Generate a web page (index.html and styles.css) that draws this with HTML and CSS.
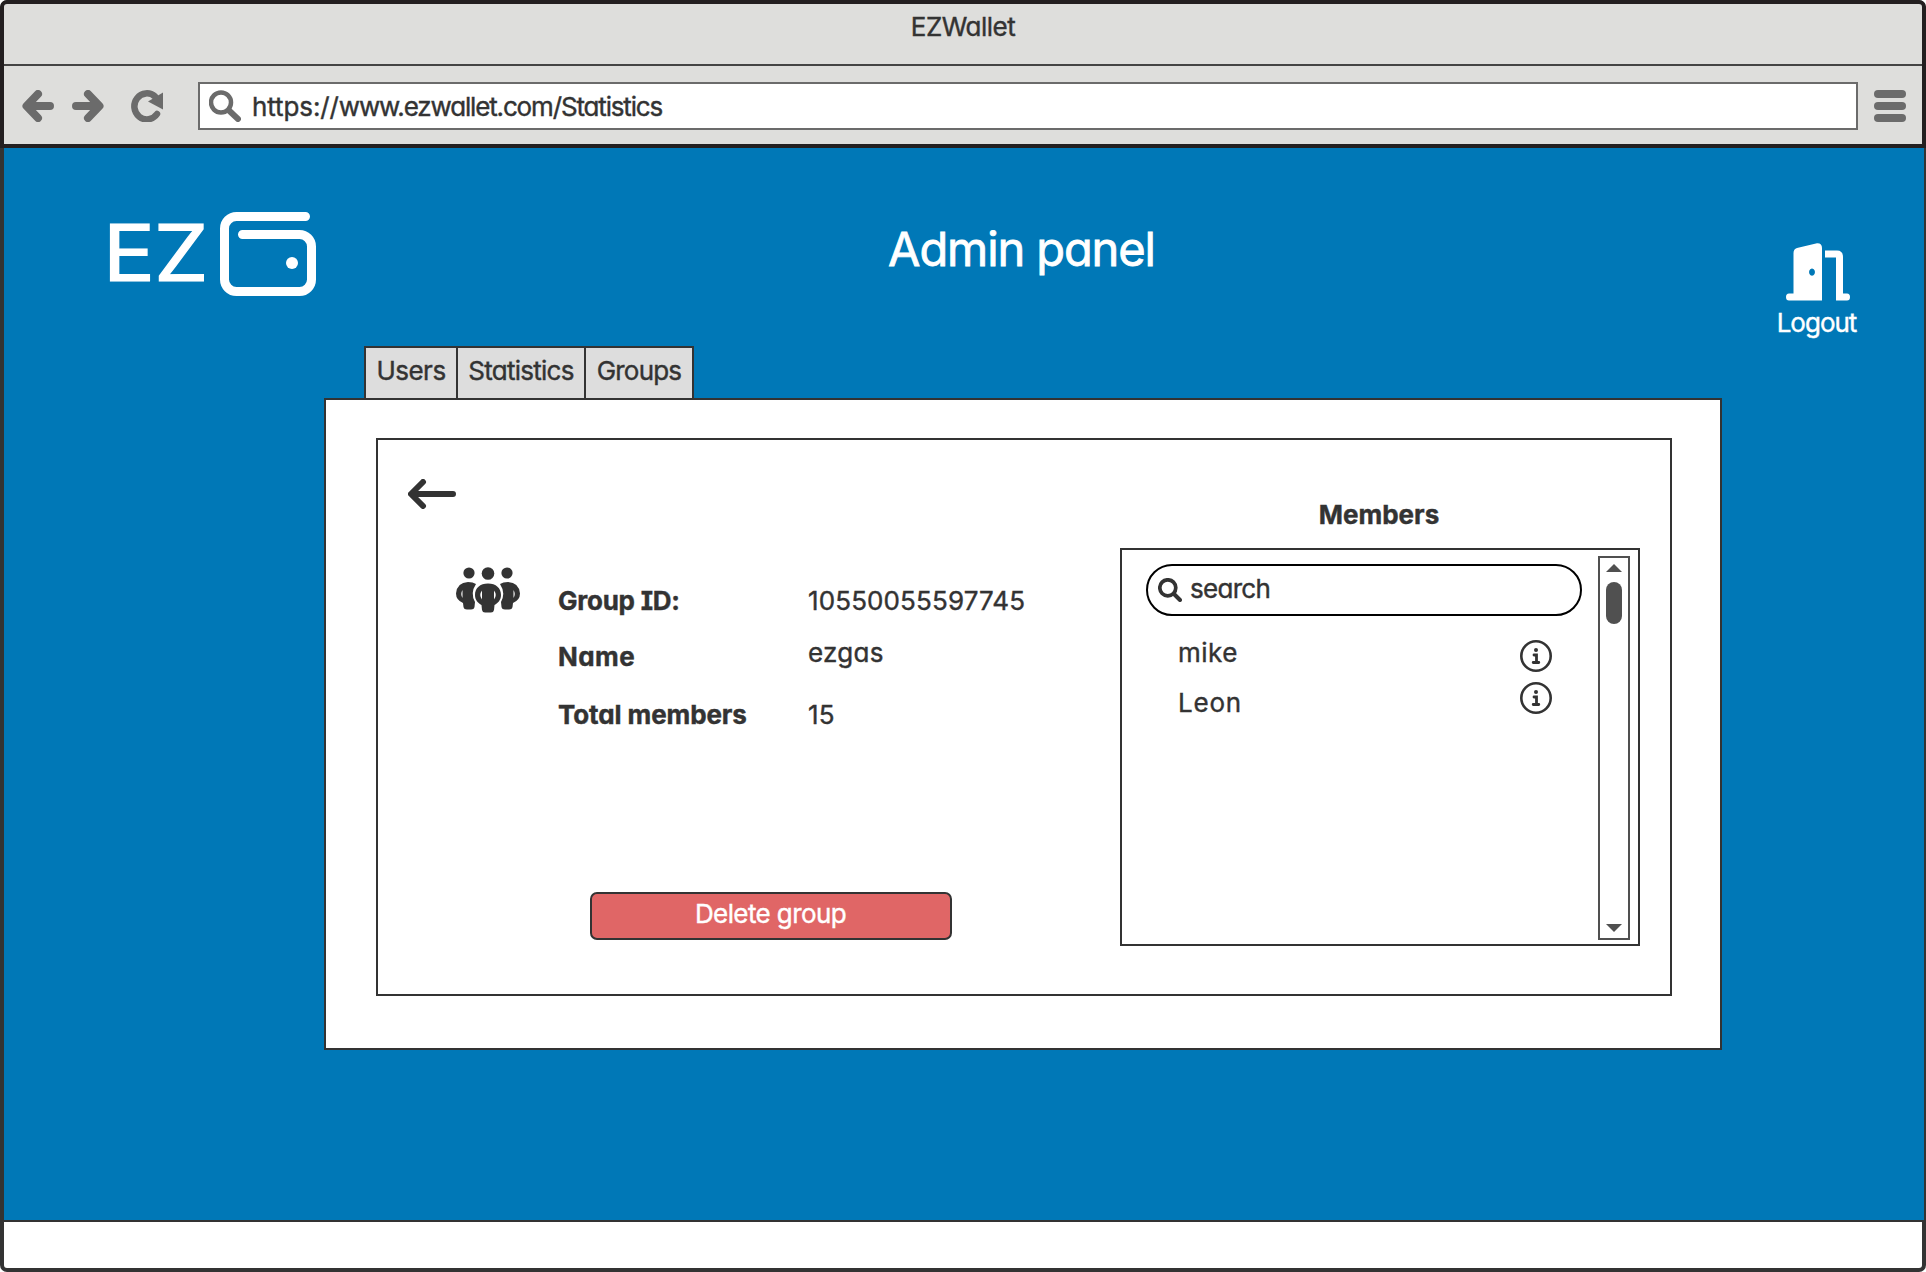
FILE: index.html
```html
<!DOCTYPE html>
<html lang="en">
<head>
<meta charset="utf-8">
<title>EZWallet</title>
<link rel="stylesheet" href="styles.css">
</head>
<body>
<div class="window">
  <header class="chrome">
    <div class="titlebar"><span class="t-title">EZWallet</span></div>
    <div class="toolbar">
      <svg class="nav-back" width="32" height="32" viewBox="0 0 32 32"><path d="M16 4 4.500 16 16 28M5 16h23" class="nav-stroke"/></svg>
      <svg class="nav-forward" width="32" height="32" viewBox="0 0 32 32"><path d="M16 4 27.500 16 16 28M27 16H4" class="nav-stroke"/></svg>
      <svg class="nav-reload" width="32" height="32" viewBox="0 0 32 32"><path d="M26 24A12.500 13 0 1 1 24 6.500" fill="none" stroke="#6b6b6b" stroke-width="6.500" stroke-linecap="round"/><path d="M32 2.500V19.500L17 11.500z" fill="#6b6b6b"/></svg>
      <div class="address">
        <svg width="32" height="32" viewBox="0 0 32 32" fill="none" stroke="#6b6b6b" stroke-linecap="round"><circle cx="12" cy="12.500" r="10" stroke-width="4.500"/><path d="M20 20.500 29 29" stroke-width="6"/></svg>
        <span class="t-url"><span class="t-scheme">https://</span>www.ezwallet.com/Statistics</span>
      </div>
      <svg class="menu" width="32" height="32" viewBox="0 0 32 32" fill="#6b6b6b"><rect width="32" height="8" rx="4"/><rect y="12" width="32" height="8" rx="4"/><rect y="24" width="32" height="8" rx="4"/></svg>
    </div>
  </header>
  <main class="page">
    <div class="hero">
      <div class="brand">
        <span class="t-brand">EZ</span>
        <svg width="96" height="84" viewBox="0 0 96 84" fill="none" stroke="#fff" stroke-width="9" stroke-linecap="round"><path d="M85.500 4.500H16.500a12 12 0 0 0-12 12v51a12 12 0 0 0 12 12h63a12 12 0 0 0 12-12V34.500a12 12 0 0 0-12-12H22.500"/><circle cx="72" cy="51" r="6" fill="#fff" stroke="none"/></svg>
      </div>
      <h1 class="t-heading">Admin panel</h1>
      <a class="logout">
        <svg width="64" height="58" viewBox="0 0 64 58" fill="#fff"><path fill-rule="evenodd" d="M3 50.500H7.500V10Q7.500 6 11 5L31 .300Q36 0 36 5V57.500H3Q0 57.500 0 54Q0 50.500 3 50.500zM26 25.500a2.900 3.600 0 1 0 .01 0z"/><path d="M39 7.500H51Q57 7.500 57 14V50.500H61Q64 50.500 64 54Q64 57.500 61 57.500H50V14.500H39z"/></svg>
        <span class="t-logout">Logout</span>
      </a>
    </div>
    <nav class="tabs">
      <a class="tab tab-users"><span class="t-users">Users</span></a>
      <a class="tab tab-stats"><span class="t-stats">Statistics</span></a>
      <a class="tab tab-groups"><span class="t-groups">Groups</span></a>
    </nav>
    <section class="panel">
      <div class="card">
        <div class="info">
          <svg class="back" width="48" height="30" viewBox="0 0 48 30" fill="none" stroke="#333" stroke-width="6" stroke-linecap="round" stroke-linejoin="round"><path d="M15 3 3 15l12 12M4 15h41"/></svg>
          <div class="summary">
            <svg width="64" height="46" viewBox="0 0 64 46" fill="#333">
              <circle cx="13" cy="6" r="5.600"/><circle cx="51" cy="6" r="5.600"/><circle cx="32" cy="6.500" r="6.300"/>
              <path fill-rule="evenodd" d="M12 15Q17 15 20 17Q14 26 19 35L18.500 40Q18 42.500 15 42.500H11Q8 42.500 7.500 40L7 36Q0 33 0 26.500Q1 15.500 12 15zM6.500 23Q4 27 6.500 31z"/>
              <path fill-rule="evenodd" d="M52 15Q47 15 44 17Q50 26 45 35L45.500 40Q46 42.500 49 42.500H53Q56 42.500 56.500 40L57 36Q64 33 64 26.500Q63 15.500 52 15zM57.500 23Q60 27 57.500 31z"/>
              <path fill-rule="evenodd" d="M32 16.500C24 16.500 19 21 19 28C19 33 22 36 25.500 38L26 43Q26.500 45.500 29 45.500H35Q37.500 45.500 38 43L38.500 38C42 36 45 33 45 28C45 21 40 16.500 32 16.500zM26 23.500Q22.500 28 26 32.500zM38 23.500Q41.500 28 38 32.500z"/>
            </svg>
            <dl class="facts">
              <dt><span class="t-gid">Group ID:</span></dt><dd><span class="t-num">10550055597745</span></dd>
              <dt><span class="t-name">Name</span></dt><dd class="raised"><span class="t-ezgas">ezgas</span></dd>
              <dt><span class="t-total">Total members</span></dt><dd><span class="t-num">15</span></dd>
            </dl>
          </div>
          <button class="delete"><span class="t-delete">Delete group</span></button>
        </div>
        <div class="members">
          <h2><span class="t-members">Members</span></h2>
          <div class="list">
            <div class="list-body">
              <div class="search">
                <svg width="24" height="24" viewBox="0 0 24 24" fill="none" stroke="#333" stroke-linecap="round"><circle cx="9.800" cy="9.800" r="8" stroke-width="3.700"/><path d="M16 16l6 6" stroke-width="4"/></svg>
                <span class="t-search">search</span>
              </div>
              <div class="people">
                <ul class="names"><li><span class="t-mike">mike</span></li><li><span class="t-leon">Leon</span></li></ul>
                <div class="icons">
                  <svg width="32" height="32" viewBox="0 0 32 32"><circle cx="16" cy="16" r="14.700" fill="none" stroke="#333" stroke-width="2.600"/><circle cx="16" cy="10" r="2" fill="#333"/><path d="M14 15h2.500v7M13.200 22.500h5.600" fill="none" stroke="#333" stroke-width="2.800" stroke-linecap="round"/></svg>
                  <svg width="32" height="32" viewBox="0 0 32 32"><circle cx="16" cy="16" r="14.700" fill="none" stroke="#333" stroke-width="2.600"/><circle cx="16" cy="10" r="2" fill="#333"/><path d="M14 15h2.500v7M13.200 22.500h5.600" fill="none" stroke="#333" stroke-width="2.800" stroke-linecap="round"/></svg>
                </div>
              </div>
            </div>
            <div class="scrollbar"><i class="up"></i><i class="thumb"></i><i class="down"></i></div>
          </div>
        </div>
      </div>
    </section>
  </main>
  <footer class="statusbar"></footer>
</div>
</body>
</html>
```
FILE: styles.css
```css
* { box-sizing: border-box; }
body {
  margin: 0;
  background: #fff;
  color: #333;
  font: 400 26px/30px Inter, "Noto Sans", sans-serif;
  font-feature-settings: "cv11", "cv08";
  -webkit-text-stroke: 0.4px currentColor;
}
h1, h2, dl, dd, ul { margin: 0; padding: 0; font-size: inherit; }
ul { list-style: none; }
svg { display: block; flex: none; }
span { white-space: nowrap; }

.window { width: 1926px; height: 1272px; display: flex; flex-direction: column; border-radius: 7px; overflow: hidden; background: #333; }

.chrome { height: 148px; flex: none; background: #dededc; border: 4px solid #231f20; border-radius: 7px 7px 0 0; }
.titlebar { height: 62px; border-bottom: 2px solid #444; padding-top: 8px; text-align: center; }
.toolbar { height: 78px; display: flex; align-items: center; padding: 2px 16px 0 18px; }
.nav-stroke { fill: none; stroke: #6b6b6b; stroke-width: 8; stroke-linecap: round; stroke-linejoin: round; }
.nav-forward { margin-left: 18px; }
.nav-reload { margin-left: 27px; }
.address { margin-left: 35px; width: 1660px; height: 48px; background: #fff; border: 2px solid #6b6b6b; display: flex; align-items: center; padding-left: 9px; gap: 11px; }
.address > span { margin-top: 2px; }
.menu { margin-left: 16px; }

.page { height: 1072px; flex: none; margin: 0 2px 0 4px; background: #0078b7; color: #fff; overflow: hidden; }
.hero { height: 198px; display: grid; grid-template-columns: 320px 1fr 213px; }
.brand { padding: 64px 0 0 98px; display: flex; height: 150px; }
.t-brand { width: 118px; font-size: 78px; line-height: 81px; }
.t-heading { font-size: 47px; line-height: 56px; font-weight: 400; padding: 73px 0 0 8px; text-align: center; }
.logout { padding: 95px 0 0; display: flex; flex-direction: column; align-items: center; }
.logout span { margin: 7px 2px 0 0; }

.tabs { display: flex; padding-left: 360px; height: 52px; color: #333; }
.tab { background: #ddd; border: 2px solid #333; border-bottom: 0; text-align: center; padding-top: 8px; }
.tab + .tab { border-left: 0; }
.tab-users { width: 94px; }
.tab-stats { width: 128px; }
.tab-groups { width: 108px; }

.panel { width: 1398px; height: 652px; margin-left: 320px; padding: 38px 48px 52px 50px; background: #fff; border: 2px solid #333; color: #333; }
.card { width: 1296px; height: 558px; border: 2px solid #333; display: grid; grid-template-columns: 742px 520px; }
.info { padding: 39px 0 0 30px; }
.summary { margin-top: 58px; padding-left: 48px; display: flex; gap: 38px; height: 180px; }
.facts { padding-top: 19px; display: grid; grid-template-columns: 250px auto; grid-template-rows: 56px 58px 30px; align-content: start; }
.facts dt { font-weight: 700; }
.raised { margin-top: -4px; }
.delete { display: block; margin: 145px 0 0 182px; width: 362px; height: 48px; border: 2px solid #333; border-radius: 7px; background: #e06666; color: #fff; font: inherit; font-feature-settings: inherit; -webkit-text-stroke: inherit; padding: 0 1px 4px 0; }

.members h2 { height: 108px; padding: 60px 2px 0 0; text-align: center; font-weight: 700; }
.list { width: 520px; height: 398px; border: 2px solid #333; display: flex; justify-content: space-between; padding: 6px 8px 4px 24px; }
.list-body { width: 436px; padding-top: 8px; }
.search { height: 52px; border: 2px solid #000; border-radius: 26px; display: flex; align-items: center; padding-left: 10px; gap: 8px; }
.search span { margin-top: -2px; }
.people { display: flex; justify-content: space-between; padding: 22px 30px 0 32px; }
.names li { height: 50px; }
.icons { padding-top: 2px; display: grid; gap: 10px; align-content: start; }
.scrollbar { width: 32px; height: 384px; border: 2px solid #505050; display: flex; flex-direction: column; align-items: center; padding: 6px 0; }
.up { border: 8px solid transparent; border-top: 0; border-bottom-color: #505050; }
.thumb { width: 16px; height: 42px; border-radius: 8px; background: #505050; margin-top: 10px; }
.down { border: 8px solid transparent; border-bottom: 0; border-top-color: #505050; margin-top: auto; }

.statusbar { flex: 1; margin: 2px 4px 4px; background: #fff; border-radius: 0 0 3px 3px; }

/* Tracking per label */
.t-title { letter-spacing: -0.5px; }
.t-url { letter-spacing: -1.15px; }
.t-scheme { letter-spacing: -0.1px; }
.t-brand { letter-spacing: -1px; -webkit-text-stroke-width: 1.2px; transform: translateX(1px) scaleX(1.11); transform-origin: left; }
.t-heading { letter-spacing: -1.1px; -webkit-text-stroke-width: 0.8px; }
.t-logout { letter-spacing: -1px; }
.t-users { letter-spacing: -0.5px; }
.t-stats { letter-spacing: -0.75px; }
.t-groups { letter-spacing: -0.8px; }
.t-gid { letter-spacing: -0.25px; }
.t-num { letter-spacing: 0.12px; }
.t-name { letter-spacing: 0.4px; }
.t-ezgas { letter-spacing: 0.3px; }
.t-total { letter-spacing: -0.1px; }
.t-delete { letter-spacing: -0.6px; }
.t-search { letter-spacing: -0.7px; }
.t-mike { letter-spacing: 0.5px; }
.t-leon { letter-spacing: 0.8px; }
```
